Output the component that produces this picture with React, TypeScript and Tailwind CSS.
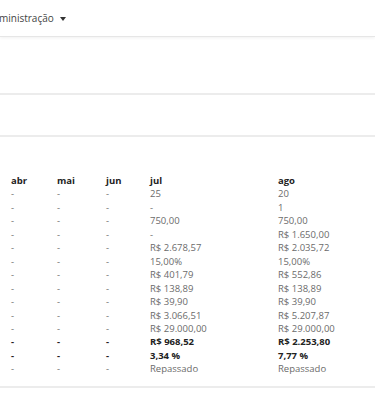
import React from 'react';

// Monthly summary table, cropped view (scrolled horizontally to abr..ago).

type Row = { jul: string; ago: string; bold?: boolean };

const rows: Row[] = [
  { jul: '25', ago: '20' },
  { jul: '-', ago: '1' },
  { jul: '750,00', ago: '750,00' },
  { jul: '-', ago: 'R$ 1.650,00' },
  { jul: 'R$ 2.678,57', ago: 'R$ 2.035,72' },
  { jul: '15,00%', ago: '15,00%' },
  { jul: 'R$ 401,79', ago: 'R$ 552,86' },
  { jul: 'R$ 138,89', ago: 'R$ 138,89' },
  { jul: 'R$ 39,90', ago: 'R$ 39,90' },
  { jul: 'R$ 3.066,51', ago: 'R$ 5.207,87' },
  { jul: 'R$ 29.000,00', ago: 'R$ 29.000,00' },
  { jul: 'R$ 968,52', ago: 'R$ 2.253,80', bold: true },
  { jul: '3,34 %', ago: '7,77 %', bold: true },
  { jul: 'Repassado', ago: 'Repassado' },
];

export default function App() {
  return (
    <div className="h-[399px] w-[375px] overflow-hidden bg-white font-['Open_Sans',sans-serif]">
      <nav className="flex h-[37px] items-center border-b border-[#e6e6e6] shadow-[0_1px_3px_rgba(0,0,0,0.06)]">
        <span className="-ml-px text-[10px] text-[#444]">ministração</span>
        <span className="ml-[6px] mt-px h-0 w-0 border-x-[3.5px] border-t-[4px] border-x-transparent border-t-[#333]" />
      </nav>

      <div className="h-[58px] border-b-2 border-[#ececec]" />
      <div className="h-[42px] border-b-2 border-[#ececec]" />

      <div className="border-b-2 border-[#ececec] pb-[10px] pl-[11px] pt-[37px]">
        <table className="border-collapse text-[9.5px] leading-[13.45px] text-[#6b6b6b]">
          <thead>
            <tr className="text-[9.5px] font-bold text-[#222]">
              <th className="w-[46px] p-0 text-left">abr</th>
              <th className="w-[49px] p-0 text-left">mai</th>
              <th className="w-[44px] p-0 text-left">jun</th>
              <th className="w-[128px] p-0 text-left">jul</th>
              <th className="p-0 text-left">ago</th>
            </tr>
          </thead>
          <tbody>
            {rows.map((r, i) => (
              <tr key={i} className={r.bold ? 'font-bold text-[#222]' : ''}>
                <td className="p-0">-</td>
                <td className="p-0">-</td>
                <td className="p-0">-</td>
                <td className="p-0">{r.jul}</td>
                <td className="p-0">{r.ago}</td>
              </tr>
            ))}
          </tbody>
        </table>
      </div>
    </div>
  );
}
